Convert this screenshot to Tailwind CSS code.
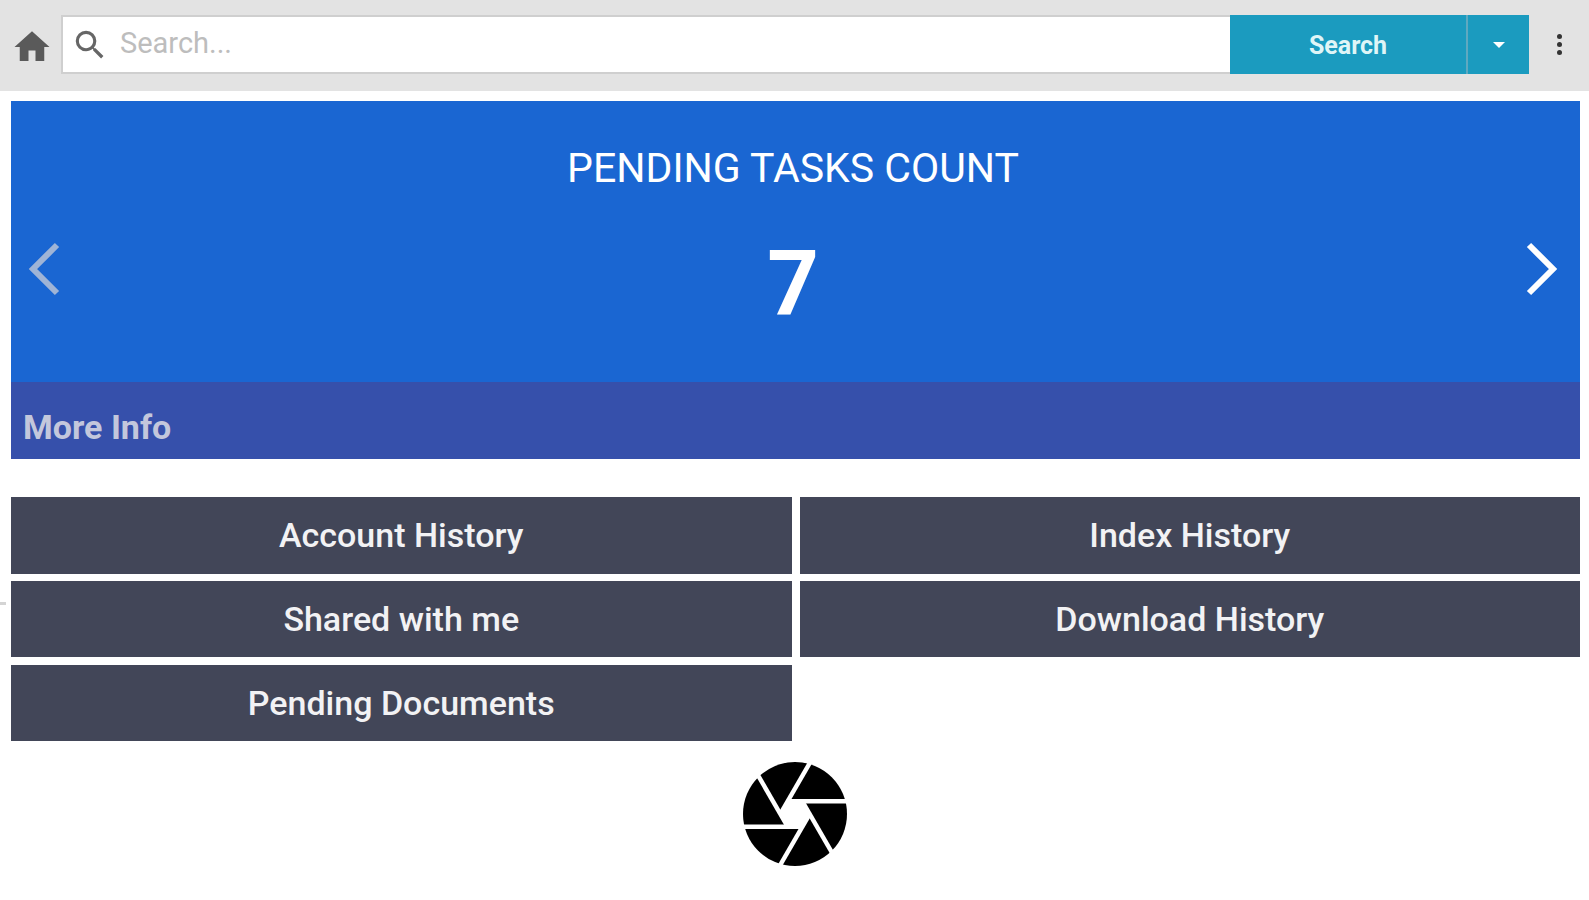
<!DOCTYPE html>
<html lang="en">
<head>
<meta charset="UTF-8">
<title>Home</title>
<script src="https://cdn.jsdelivr.net/npm/@tailwindcss/browser@4"></script>
</head>
<body class="bg-white font-['Roboto',sans-serif] h-[900px] overflow-hidden relative">
    <!-- top bar -->
    <header class="h-[91px] bg-[#e3e3e3] flex items-start pt-[15px]">
        <div class="w-[61px] h-[59px] flex items-center justify-center">
            <svg class="w-[42px] h-[42px] mt-[4px] ml-[2px]" viewBox="0 0 24 24" fill="#5a5a5a"><path d="M10 20v-6h4v6h5v-8h3L12 3 2 12h3v8z"/></svg>
        </div>
        <div class="w-[1169px] h-[59px] bg-white border-2 border-[#cfcfcf] border-r-0 flex items-center">
            <svg class="w-[38px] h-[38px] ml-[8px]" viewBox="0 0 24 24" fill="#666"><path d="M15.5 14h-.79l-.28-.27A6.47 6.47 0 0 0 16 9.5 6.5 6.5 0 1 0 9.5 16c1.61 0 3.09-.59 4.23-1.57l.27.28v.79l5 4.99L20.49 19l-4.99-5zm-6 0C7.01 14 5 11.99 5 9.5S7.01 5 9.5 5 14 7.01 14 9.5 11.99 14 9.5 14z"/></svg>
            <span class="ml-[11px] -mt-[2px] text-[29px] text-[#bdbdbd]">Search...</span>
        </div>
        <div class="w-[299px] h-[59px] bg-[#1b9bbf] flex text-white">
            <div class="w-[236px] pt-[2px] flex items-center justify-center text-[25px] font-bold text-[#dff5f7]">Search</div>
            <div class="flex-1 border-l-2 border-[#5fa9c0] flex items-center justify-center">
                <div class="w-0 h-0 border-x-[6px] border-x-transparent border-t-[6px] border-t-white"></div>
            </div>
        </div>
        <div class="flex-1 h-[59px] flex flex-col items-center justify-center gap-[3px] pl-[1px]">
            <div class="w-[5px] h-[5px] rounded-full bg-[#333]"></div>
            <div class="w-[5px] h-[5px] rounded-full bg-[#333]"></div>
            <div class="w-[5px] h-[5px] rounded-full bg-[#333]"></div>
        </div>
    </header>

    <main class="pl-[11px] pr-[9px] pt-[10px]">
        <!-- pending tasks carousel -->
        <section class="bg-[#1a66d2] h-[358px] flex flex-col">
            <div class="h-[281px] flex items-start justify-between pl-[15px] pr-[20px]">
                <svg class="w-[36px] h-[56px] mt-[140px]" viewBox="0 0 36 56" fill="none" stroke="#9fb4d6" stroke-width="6"><path d="M31 4 7 28l24 24"/></svg>
                <div class="text-center text-white">
                    <h1 class="text-[41px] leading-[48px] mt-[43px]">PENDING TASKS COUNT</h1>
                    <div class="text-[90px] leading-[100px] font-bold mt-[43px]">7</div>
                </div>
                <svg class="w-[36px] h-[56px] mt-[140px]" viewBox="0 0 36 56" fill="none" stroke="#fff" stroke-width="6"><path d="m5 4 24 24L5 52"/></svg>
            </div>
            <div class="flex-1 bg-[#3650ab] px-[12px] pt-[25px] text-[34px] leading-[40px] font-bold text-[#c3c7dc]">More Info</div>
        </section>

        <!-- shortcut buttons -->
        <nav class="grid grid-cols-2 gap-x-[8px] gap-y-[7px] mt-[38px] text-[34px] font-medium text-[#f2f2f4]">
            <a class="h-[77px] bg-[#424658] flex items-center justify-center">Account History</a>
            <a class="h-[77px] bg-[#424658] flex items-center justify-center">Index History</a>
            <a class="h-[76px] bg-[#424658] flex items-center justify-center">Shared with me</a>
            <a class="h-[76px] bg-[#424658] flex items-center justify-center">Download History</a>
            <a class="h-[76px] mt-[1px] bg-[#424658] flex items-center justify-center">Pending Documents</a>
        </nav>

        <!-- aperture logo -->
        <div class="flex justify-center mt-[20px] pr-[2px]">
            <svg class="w-[106px] h-[106px]" viewBox="-53 -53 106 106">
                <circle r="52" fill="#000"/>
                <polygon points="-14.7,0 -7.3,12.7 7.3,12.7 14.7,0 7.3,-12.7 -7.3,-12.7" fill="#fff"/>
                <g stroke="#fff" stroke-width="4.4">
                    <path d="M-56 12.7H7.3"/>
                    <path d="M-56 12.7H7.3" transform="rotate(60)"/>
                    <path d="M-56 12.7H7.3" transform="rotate(120)"/>
                    <path d="M-56 12.7H7.3" transform="rotate(180)"/>
                    <path d="M-56 12.7H7.3" transform="rotate(240)"/>
                    <path d="M-56 12.7H7.3" transform="rotate(300)"/>
                </g>
            </svg>
        </div>
    </main>
    <div class="absolute left-0 top-[602px] w-[6px] h-[3px] bg-[#d4d4d4]"></div>
</body>
</html>
